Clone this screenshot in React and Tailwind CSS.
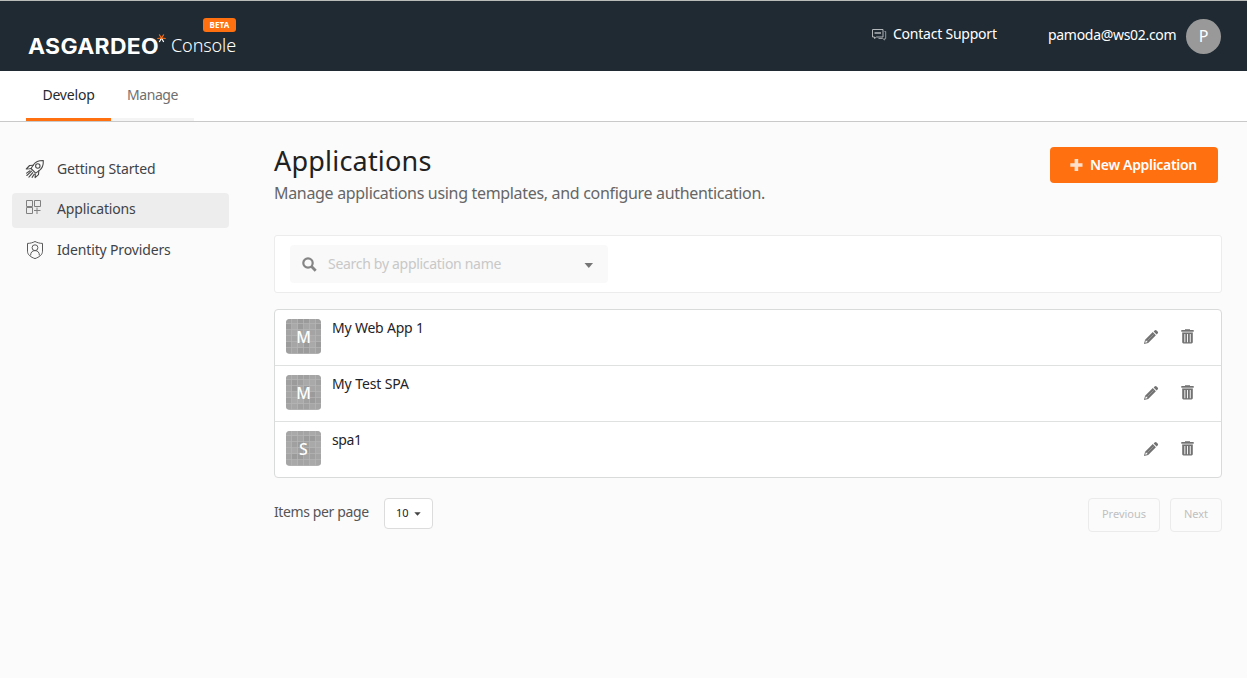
import React from "react";

function RocketIcon() {
  return (
    <svg width="20" height="20" viewBox="0 0 20 20" fill="none" stroke="#4a4a4a" strokeWidth="1.1" strokeLinejoin="round" strokeLinecap="round">
      <path d="M18.300 1.500c-4.500-.1-7.600 1-9.800 4.200L6 9.500l4.700 4.600 3.800-2.700c3.100-2.300 4-5.400 3.800-9.900z" />
      <circle cx="12.800" cy="7" r="2.200" />
      <path d="M8.300 6.200 4.600 6.500 1.300 10l3.300-.3M13.800 11.900l-.3 3.700-3.400 3 .2-3.200M4.600 9.700l1.400-.2M6.600 12.200l-4.800 4.300M7.800 13.600l-3.900 4.600M9.300 15l-2.200 3.400M5 11.800l-3.400 2.300" />
    </svg>
  );
}

function AppsIcon() {
  return (
    <svg width="16" height="16" viewBox="0 0 16 16" fill="none" stroke="#808080" strokeWidth="1">
      <path d="M.5 1.500h6v6h-6zM8.500 1.500h6v6h-6zM.5 8.500h6v6h-6zM11 8.500v6.500M8 11.500h6.500" />
    </svg>
  );
}

function ShieldIcon() {
  return (
    <svg width="18" height="20" viewBox="0 0 18 20" fill="none" stroke="#5a5a5a" strokeWidth="1">
      <path d="M9 1.500c2.300 1.200 4.800 1.900 7.500 1.900v7.800c0 3.700-3.300 5.900-7.500 7.400-4.200-1.500-7.500-3.700-7.500-7.400V3.400C4.200 3.400 6.700 2.700 9 1.500z" />
      <circle cx="9" cy="7.700" r="2.900" />
      <path d="M4.600 15.500c0-3 1.500-4.900 4.400-4.900s4.400 1.900 4.400 4.900" />
    </svg>
  );
}

function ChatIcon() {
  return (
    <svg width="15" height="13" viewBox="0 0 15 13" fill="none" stroke="#b3b7b9" strokeWidth="1">
      <path d="M.5 1.500h10.500v7.500H4.500l-2 1.500V9h-2z" />
      <path d="M2.500 4.500h6.500M2.500 5.500h6.500" stroke="#8d9397" />
      <path d="M12.500 3.500h1.200v7h-1v1.500l-2-1.500H6.500" stroke="#969b9e" />
    </svg>
  );
}

function PencilIcon() {
  return (
    <svg width="16" height="16" viewBox="0 0 16 16">
      <path d="M11.600 1.400c.7-.7 1.300-.7 2 0l1 1c.7.700.7 1.300 0 2l-1 1-3-3z" fill="#727272" />
      <path fillRule="evenodd" d="M9.800 3.100l3.100 3.100-7.700 7.700-4.300 1.200 1.200-4.300zM2.900 11.300l-.7 2.500 2.500-.7z" fill="#727272" />
      <path d="M4.300 11.700 10.600 5.400" stroke="#a5a5a5" strokeWidth=".7" />
    </svg>
  );
}

function TrashIcon() {
  return (
    <svg width="13" height="15" viewBox="0 0 13 15" fill="#727272">
      <path d="M4 1V.3h5V1h3.700v1.700H.3V1z" />
      <path d="M1.200 2.700h10.600v1.500H1.200z" fill="#b0b0b0" />
      <path fillRule="evenodd" d="M1.200 4h10.600v9.100c0 .9-.5 1.400-1.300 1.400h-8c-.8 0-1.300-.5-1.300-1.400zM3.400 5v8.200h.9V5zM6.100 5v8.200H7V5zM8.800 5v8.200h.9V5z" />
    </svg>
  );
}

const shades = ["#a0a0a0", "#a9a9a9", "#a4a4a4", "#9b9b9b", "#a6a6a6"];

function AppAvatar({ letter, seed }) {
  const cells = [];
  for (let r = 0; r < 7; r++)
    for (let c = 0; c < 6; c++)
      cells.push(
        <rect key={r + "-" + c} x={c * 6} y={r * 6 - 1} width="5.300" height="5.300" fill={shades[(r * r * 3 + c * c * 2 + r * c + seed) % 5]} />
      );
  return (
    <div className="relative flex h-[35px] w-[35px] items-center justify-center overflow-hidden rounded-[4px] bg-[#b6b6b6]">
      <svg className="absolute inset-0" width="35" height="35">{cells}</svg>
      <span className="relative text-[16px] leading-[20px] font-medium text-white">{letter}</span>
    </div>
  );
}

const apps = [
  { name: "My Web App 1", letter: "M", seed: 0, track: "tracking-[-0.2px]" },
  { name: "My Test SPA", letter: "M", seed: 2, track: "tracking-[-0.1px]" },
  { name: "spa1", letter: "S", seed: 4, track: "tracking-[-0.4px]" },
];

function Header() {
  return (
    <header className="flex h-[71px] shrink-0 items-start justify-between border-t border-[#b9bcb9] bg-[#1f2a32] pr-[26px] pl-[28px] text-white">
      <div className="relative flex pt-[31px]">
        <span className="w-[130px]">
          <span className="inline-block origin-left scale-x-[1.09] font-['Inter'] text-[21px] leading-[30px] font-bold tracking-[0.3px] whitespace-nowrap">ASGARDEO</span>
        </span>
        <svg className="mt-[2px] -ml-[1px] shrink-0" width="9" height="9" viewBox="0 0 9 9" fill="none" strokeWidth="1.200">
          <path d="M4.500 4 2.300 8M4.500 4 6.700 8" stroke="#fff" />
          <path d="M4.500 4 .3 4.500M4.500 4 8.700 4.500M4.500 4 2.200.5M4.500 4 6.800.5" stroke="#ff7010" />
        </svg>
        <span className="ml-[5px] text-[18px] leading-[27px] font-light tracking-[-0.1px] whitespace-nowrap">Console</span>
        <span className="absolute top-[17px] left-[175px] flex h-[14px] w-[33px] items-center justify-center rounded-[3px] bg-[#ff7010] text-[8px] font-bold tracking-[0.2px]">BETA</span>
      </div>
      <div className="flex">
        <div className="mt-[23px] flex h-[20px] items-center">
          <ChatIcon />
          <span className="ml-[6px] w-[104px] text-[14px] leading-[20px] tracking-[-0.23px] whitespace-nowrap">Contact Support</span>
        </div>
        <span className="mt-[24px] ml-[51px] w-[129px] text-[14px] leading-[20px] tracking-[-0.3px] whitespace-nowrap">pamoda@ws02.com</span>
        <div className="mt-[18px] ml-[9px] flex h-[35px] w-[35px] items-center justify-center rounded-full bg-[#999] pb-[1px] text-[16px] leading-[20px]">P</div>
      </div>
    </header>
  );
}

function SideItem({ icon, label, active, shift }) {
  return (
    <div className={`flex h-[35px] items-center rounded-[4px] pl-[13px] ${active ? "bg-[#ededed]" : ""}`}>
      <span className={`flex w-[32px] ${shift}`}>{icon}</span>
      <span className="pb-[2px] text-[14px] leading-[20px] tracking-[-0.15px] whitespace-nowrap text-[#3f4347]">{label}</span>
    </div>
  );
}

export default function App() {
  return (
    <div className="flex h-[678px] w-[1247px] flex-col overflow-hidden bg-[#fbfbfb] font-['Noto_Sans',sans-serif]">
      <Header />
      <nav className="flex h-[51px] shrink-0 items-start border-b border-[#c9c9c9] bg-white pl-[26px] text-[14px] leading-[20px]">
        <div className="flex h-[50px] w-[85px] justify-center border-b-[3px] border-[#ff7010] pt-[14px] tracking-[-0.2px] text-[#1f2a32]">Develop</div>
        <div className="flex h-[50px] w-[83px] justify-center border-b-[3px] border-[#f4f4f4] pt-[14px] tracking-[-0.4px] text-[#6f6f6f]">Manage</div>
      </nav>
      <div className="flex flex-1">
        <aside className="ml-[12px] flex w-[217px] flex-col gap-[5.500px] pt-[30px]">
          <SideItem icon={<RocketIcon />} label="Getting Started" shift="-mt-[2px]" />
          <SideItem icon={<AppsIcon />} label="Applications" active shift="pl-[1px] -mt-[7px]" />
          <SideItem icon={<ShieldIcon />} label="Identity Providers" shift="-mt-[2px] pl-[1px]" />
        </aside>
        <main className="ml-[45px] w-[948px] pt-[21px]">
          <div className="flex h-[92px] items-start justify-between pr-[4px]">
            <div>
              <h1 className="text-[27px] leading-[36px] tracking-[0.2px] text-[#212121]">Applications</h1>
              <p className="mt-[4px] text-[16px] leading-[20px] tracking-[-0.32px] whitespace-nowrap text-[#666]">Manage applications using templates, and configure authentication.</p>
            </div>
            <button className="mt-[4px] flex h-[36px] w-[168px] items-center rounded-[4px] bg-[#ff7010] pl-[20px] text-white">
              <svg width="13" height="12" viewBox="0 0 13 12" fill="#ffdfca"><path d="M4.600 0h3.600v4.200h4.300v3.600H8.200V12H4.600V7.800H.3V4.200h4.300z" /></svg>
              <span className="ml-[7px] text-[14px] leading-[20px] font-semibold tracking-[-0.31px] whitespace-nowrap">New Application</span>
            </button>
          </div>
          <div className="flex h-[58px] items-center rounded-[3px] border border-[#ececec] bg-white pl-[15px]">
            <div className="flex h-[38px] w-[318px] items-center rounded-[4px] bg-[#f9f9f9] pr-[14px] pl-[12px]">
              <svg width="15" height="15" viewBox="0 0 15 15" fill="none" stroke="#858585" strokeWidth="2.200"><circle cx="6" cy="6" r="4.700" /><path d="m9.300 9.300 4.400 4.400" strokeWidth="2.800" /></svg>
              <span className="ml-[11px] flex-1 pb-[1px] text-[14px] leading-[20px] tracking-[-0.3px] whitespace-nowrap text-[#c8c8c8]">Search by application name</span>
              <svg className="mt-[2px]" width="10" height="5" viewBox="0 0 10 5" fill="#767676"><path d="M.5 0h8.500L4.800 5z" /></svg>
            </div>
          </div>
          <div className="mt-[16px] rounded-[4px] border border-[#d9dada] bg-white">
            {apps.map((a, i) => (
              <div key={a.name} className={`flex pl-[11px] ${i < 2 ? "h-[56px] border-b border-[#dfe0e0]" : "h-[55px]"}`}>
                <div className="mt-[9px]"><AppAvatar letter={a.letter} seed={a.seed} /></div>
                <span className={`mt-[8px] ml-[11px] flex-1 text-[14px] leading-[20px] text-[#1f2328] ${a.track}`}>{a.name}</span>
                <div className="mr-[27px] flex h-[53px] items-center gap-[22px]">
                  <PencilIcon />
                  <TrashIcon />
                </div>
              </div>
            ))}
          </div>
          <div className="mt-[20px] flex items-start">
            <span className="mt-[4px] w-[110px] text-[14px] leading-[20px] tracking-[-0.38px] whitespace-nowrap text-[#555]">Items per page</span>
            <div className="flex h-[31px] w-[49px] items-center rounded-[4px] border border-[#dcdcdc] bg-white pl-[11px] text-[11px] text-[#222]">
              10
              <svg className="ml-[5px]" width="7" height="4" viewBox="0 0 7 4" fill="#444"><path d="M.3.300h6.400L3.500 3.700z" /></svg>
            </div>
            <div className="ml-auto flex gap-[10px] text-[11px] text-[#c0c0c0]">
              <div className="flex h-[34px] w-[72px] items-center justify-center rounded-[4px] border border-[#ebebeb] pb-[2px]">Previous</div>
              <div className="flex h-[34px] w-[52px] items-center justify-center rounded-[4px] border border-[#ebebeb] pb-[2px]">Next</div>
            </div>
          </div>
        </main>
      </div>
    </div>
  );
}
